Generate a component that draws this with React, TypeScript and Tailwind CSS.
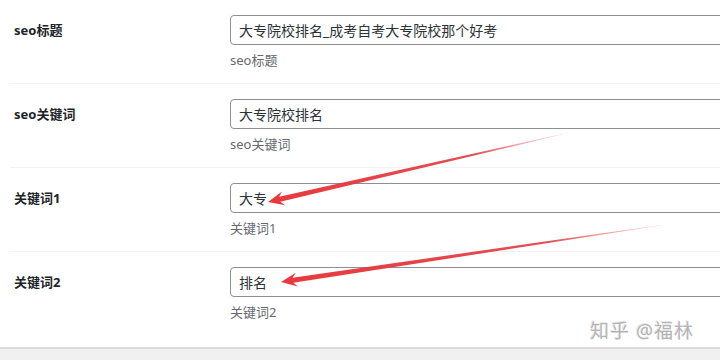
import React from "react";

type Pt = [number, number];

function arrowPath(tail: Pt, tip: Pt, headLen = 16, headHalf = 7, shaftHalf = 2.6) {
  const dx = tip[0] - tail[0];
  const dy = tip[1] - tail[1];
  const len = Math.hypot(dx, dy);
  const ux = dx / len;
  const uy = dy / len;
  const nx = -uy;
  const ny = ux;
  const bx = tip[0] - ux * headLen;
  const by = tip[1] - uy * headLen;
  const nb = tip[0] - ux * (headLen - 4);
  const nby = tip[1] - uy * (headLen - 4);
  const pts: Pt[] = [
    [tail[0] + nx * 0.3, tail[1] + ny * 0.3],
    [nb + nx * shaftHalf, nby + ny * shaftHalf],
    [bx + nx * headHalf, by + ny * headHalf],
    [tip[0], tip[1]],
    [bx - nx * headHalf, by - ny * headHalf],
    [nb - nx * shaftHalf, nby - ny * shaftHalf],
    [tail[0] - nx * 0.3, tail[1] - ny * 0.3],
  ];
  return pts.map((p) => p.map((v) => v.toFixed(1)).join(",")).join(" ");
}

const rows = [
  { label: "seo标题", value: "大专院校排名_成考自考大专院校那个好考", help: "seo标题" },
  { label: "seo关键词", value: "大专院校排名", help: "seo关键词" },
  { label: "关键词1", value: "大专", help: "关键词1" },
  { label: "关键词2", value: "排名", help: "关键词2" },
];

export default function App() {
  return (
    <div
      className="relative w-[720px] h-[360px] overflow-hidden bg-white flex flex-col"
      style={{ fontFamily: '"Noto Sans", "Noto Sans CJK SC", sans-serif' }}
    >
      <div className="flex-1 flex flex-col">
        {rows.map((r, i) => (
          <div
            key={i}
            className={`ml-[10px] h-[84px] flex shrink-0 ${i < 3 ? "border-b border-[#f2f2f2]" : ""}`}
          >
            <div className="w-[220px] shrink-0 pl-[4px] pt-[20px] text-[13px] leading-[20px] font-bold text-[#1d2327]">
              {r.label}
            </div>
            <div className="flex flex-col pt-[15px] shrink-0">
              <div className="w-[520px] h-[30px] border border-[#8c8f94] rounded-[4px] px-[8px] flex items-center text-[14px] text-[#2c3338]">
                {r.value}
              </div>
              <div className="mt-[5px] text-[13px] leading-[20px] text-[#646970]">{r.help}</div>
            </div>
          </div>
        ))}
      </div>
      <div className="h-[13px] border-t-2 border-[#dcdcdc] bg-[#f0f0f0] shrink-0" />
      <div
        className="absolute left-[590px] top-[319px] text-[19px] leading-[24px] text-[#b4b4b4] tracking-[1px]"
        style={{ textShadow: "1px 1px 0 #ffffff, -1px -1px 0 #e8e8e8" }}
      >
        知乎 @福林
      </div>
      <svg className="absolute left-0 top-0 pointer-events-none" width="720" height="360">
        <defs>
          <linearGradient id="g1" gradientUnits="userSpaceOnUse" x1="563" y1="134" x2="268" y2="202">
            <stop offset="0" stopColor="#e84a4f" stopOpacity="0.15" />
            <stop offset="0.3" stopColor="#e03a40" stopOpacity="0.9" />
            <stop offset="1" stopColor="#e8393d" stopOpacity="1" />
          </linearGradient>
          <linearGradient id="g2" gradientUnits="userSpaceOnUse" x1="662" y1="225" x2="281" y2="282">
            <stop offset="0" stopColor="#e84a4f" stopOpacity="0.15" />
            <stop offset="0.3" stopColor="#e03a40" stopOpacity="0.9" />
            <stop offset="1" stopColor="#e8393d" stopOpacity="1" />
          </linearGradient>
        </defs>
        <polygon points={arrowPath([563, 134], [268, 202])} fill="url(#g1)" />
        <polygon points={arrowPath([662, 225], [281, 282])} fill="url(#g2)" />
      </svg>
    </div>
  );
}
